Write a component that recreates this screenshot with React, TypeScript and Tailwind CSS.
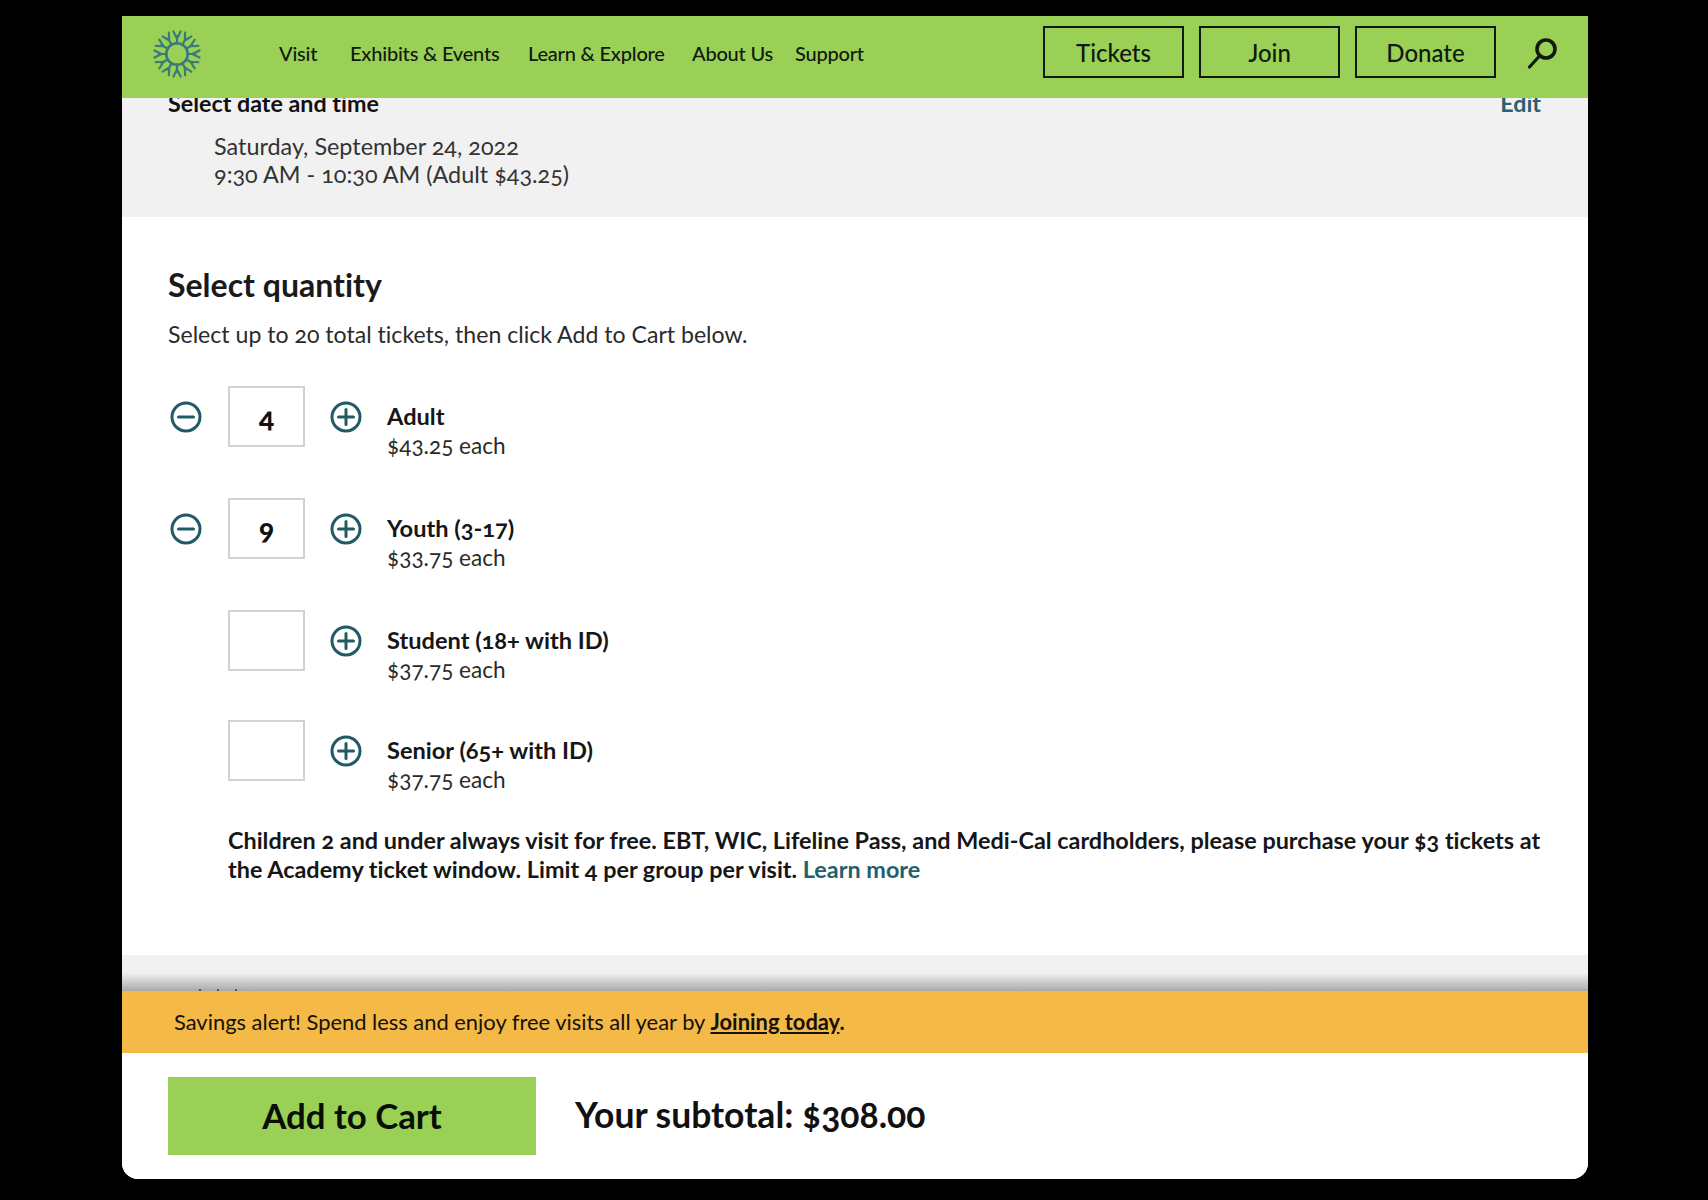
const font = "font-['Lato','Open_Sans',sans-serif] [font-variant-ligatures:none]";

function Logo() {
  const arms = Array.from({ length: 12 }, (_, i) => i * 30);
  return (
    <svg width="50" height="50" viewBox="-25 -25 50 50" fill="none" stroke="#3a7a78" strokeWidth="2.2" strokeLinecap="round">
      <circle cx="0" cy="0" r="10.8" strokeWidth="2.6" />
      {arms.map((a) => (
        <g key={a} transform={`rotate(${a})`}>
          <path d="M0 -10.5 V-18 M0 -15.5 L-3.6 -22.5 M0 -15.5 L3.6 -22.5" />
        </g>
      ))}
    </svg>
  );
}

function SearchIcon() {
  return (
    <svg width="32" height="32" viewBox="0 0 32 32" fill="none" stroke="#0f1a10" strokeLinecap="round">
      <circle cx="19" cy="12" r="9" strokeWidth="3.6" />
      <path d="M12.5 19 L2.5 30" strokeWidth="3.2" />
    </svg>
  );
}

function RoundBtn({ kind }: { kind: "minus" | "plus" }) {
  return (
    <svg width="32" height="32" viewBox="0 0 32 32" fill="none" stroke="#1f5a66" strokeLinecap="round" strokeWidth="3">
      <circle cx="16" cy="16" r="14" />
      <path d="M8.5 16 H23.5" />
      {kind === "plus" && <path d="M16 8.5 V23.5" />}
    </svg>
  );
}

const rows = [
  { q: "4", name: "Adult", price: "$43.25 each", h: "h-[112px]" },
  { q: "9", name: "Youth (3-17)", price: "$33.75 each", h: "h-[112px]" },
  { q: "", name: "Student (18+ with ID)", price: "$37.75 each", h: "h-[110px]" },
  { q: "", name: "Senior (65+ with ID)", price: "$37.75 each", h: "h-[106px]" },
];

function Row({ q, name, price, h }: { q: string; name: string; price: string; h: string }) {
  return (
    <div className={`flex items-start ${h}`}>
      <div className="w-[60px] h-[61px] flex items-center pl-[2px]">
        {q && <RoundBtn kind="minus" />}
      </div>
      <div className="w-[77px] h-[61px] bg-white border-2 border-[#d2d2d2] flex items-center justify-center text-[28px] font-black text-[#111] oldstyle-nums">
        {q}
      </div>
      <div className="w-[82px] h-[61px] flex items-center justify-center">
        <RoundBtn kind="plus" />
      </div>
      <div className="pt-[16px]">
        <div className="text-[23.6px] leading-[29px] font-bold text-[#161616] oldstyle-nums">{name}</div>
        <div className="text-[22.6px] leading-[30px] text-[#2a2a2a] oldstyle-nums">{price}</div>
      </div>
    </div>
  );
}

export default function App() {
  return (
    <div className={`bg-black h-[1200px] pt-4 pl-[122px] ${font}`}>
      <div className="w-[1466px] h-[1163px] rounded-b-[16px] overflow-hidden flex flex-col bg-white">
        <header className="relative z-10 h-[82px] shrink-0 bg-[#9bd056] flex items-center pb-[6px]">
          <div className="ml-[30px] w-[50px] shrink-0"><Logo /></div>
          <nav className="ml-[77px] mb-[2px] flex text-[20px] tracking-[-0.2px] text-[#0f1a10] font-medium">
            <a className="w-[71px]">Visit</a>
            <a className="w-[178px]">Exhibits &amp; Events</a>
            <a className="w-[164px]">Learn &amp; Explore</a>
            <a className="w-[103px]">About Us</a>
            <a>Support</a>
          </nav>
          <div className="ml-auto mb-[4px] flex items-center gap-[15px]">
            {["Tickets", "Join", "Donate"].map((t) => (
              <a key={t} className="w-[141px] h-[52px] border-2 border-[#0f1a10] flex items-center justify-center pt-[2px] text-[24px] text-[#0f1a10] font-medium">{t}</a>
            ))}
          </div>
          <div className="ml-[31px] mr-[29px] mb-[2px]"><SearchIcon /></div>
        </header>

        <section className="h-[119px] shrink-0 bg-[#f1f1f1] px-[46px]">
          <div className="-mt-[10px] flex justify-between text-[23.3px] leading-[30px] font-bold">
            <span className="text-[#111]">Select date and time</span>
            <a className="text-[#2a5f70] mr-[1px]">Edit</a>
          </div>
          <div className="ml-[46px] mt-[14px] text-[23.4px] leading-[28px] text-[#333] oldstyle-nums">
            <div>Saturday, September 24, 2022</div>
            <div>9:30 AM - 10:30 AM (Adult $43.25)</div>
          </div>
        </section>

        <section className="h-[738px] shrink-0 bg-white pl-[46px] pr-[44px] pt-[48px]">
          <h2 className="text-[32px] leading-[40px] font-bold text-[#1a1a1a]">Select quantity</h2>
          <p className="mt-[14px] text-[23.1px] leading-[30px] text-[#2a2a2a] oldstyle-nums">Select up to 20 total tickets, then click Add to Cart below.</p>
          <div className="mt-[37px]">
            {rows.map((r) => <Row key={r.name} {...r} />)}
          </div>
          <p className="ml-[60px] text-[23.4px] leading-[29px] font-bold text-[#161616] oldstyle-nums">
            Children 2 and under always visit for free. EBT, WIC, Lifeline Pass, and Medi-Cal cardholders, please purchase your $3 tickets at the Academy ticket window. Limit 4 per group per visit. <a className="text-[#1f5f6e]">Learn more</a>
          </p>
        </section>

        <section className="h-[36px] shrink-0 bg-gradient-to-b from-[#f1f1f1] from-50% to-[#a9a9a9] flex items-end gap-[16px] pl-[77px]">
          <span className="w-[2px] h-[2px] bg-[#555]"></span>
          <span className="w-[2px] h-[2px] bg-[#555]"></span>
          <span className="w-[2px] h-[2px] bg-[#555]"></span>
        </section>

        <div className="h-[62px] shrink-0 bg-[#f4b946] flex items-center pl-[52px] text-[21.9px] text-[#14110a]">
          <span>Savings alert! Spend less and enjoy free visits all year by <a className="font-bold underline">Joining today</a><b>.</b></span>
        </div>

        <div className="flex-1 bg-white flex items-start pl-[46px] pt-[24px]">
          <button className="w-[368px] h-[78px] bg-[#9bd056] text-[34.8px] font-bold text-[#0a0f06]">Add to Cart</button>
          <div className="ml-[39px] h-[76px] flex items-center text-[35.5px] font-bold text-[#111] oldstyle-nums">Your subtotal: $308.00</div>
        </div>
      </div>
    </div>
  );
}
